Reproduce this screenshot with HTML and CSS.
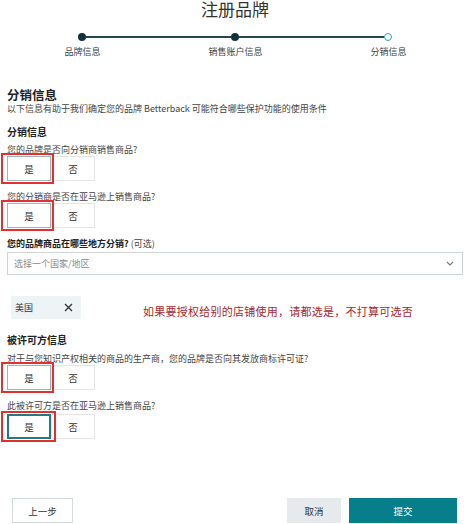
FILE: index.html
```html
<!DOCTYPE html>
<html lang="zh-CN">

<head>
    <meta charset="UTF-8">
    <meta name="viewport" content="width=device-width, initial-scale=1.0">
    <title>注册品牌</title>
    <link rel="stylesheet" href="styles.css">
</head>

<body>
    <div class="page">
        <h1 class="title">注册品牌</h1>

        <div class="steps">
            <div class="track">
                <span class="dot done"></span>
                <span class="bar"></span>
                <span class="dot done"></span>
                <span class="bar"></span>
                <span class="dot current"></span>
            </div>
            <div class="step-labels">
                <span>品牌信息</span>
                <span>销售账户信息</span>
                <span>分销信息</span>
            </div>
        </div>

        <div class="form">
            <h2 class="sec-title">分销信息</h2>
            <p class="desc">以下信息有助于我们确定您的品牌 Betterback 可能符合哪些保护功能的使用条件</p>

            <h3 class="sub-title">分销信息</h3>
            <p class="q q-first">您的品牌是否向分销商销售商品?</p>
            <div class="choice">
                <span class="mark"><button class="opt selected">是</button></span>
                <button class="opt">否</button>
            </div>

            <p class="q">您的分销商是否在亚马逊上销售商品?</p>
            <div class="choice">
                <span class="mark"><button class="opt selected">是</button></span>
                <button class="opt">否</button>
            </div>

            <p class="q"><b>您的品牌商品在哪些地方分销?</b> (可选)</p>
            <div class="select">
                <span class="placeholder">选择一个国家/地区</span>
                <svg class="chevron" width="8" height="5" viewBox="0 0 8 5">
                    <path d="M1 1l3 3 3-3" fill="none" stroke="#777" stroke-width="1.1" />
                </svg>
            </div>

            <div class="chip-row">
                <span class="chip">
                    美国
                    <svg width="9" height="9" viewBox="0 0 9 9">
                        <path d="M1 1l7 7M8 1l-7 7" stroke="#333" stroke-width="1.3" />
                    </svg>
                </span>
                <span class="note">如果要授权给别的店铺使用，请都选是，不打算可选否</span>
            </div>

            <h3 class="sub-title sub-second">被许可方信息</h3>
            <p class="q q-near">对于与您知识产权相关的商品的生产商，您的品牌是否向其发放商标许可证?</p>
            <div class="choice">
                <span class="mark"><button class="opt selected">是</button></span>
                <button class="opt">否</button>
            </div>

            <p class="q">此被许可方是否在亚马逊上销售商品?</p>
            <div class="choice choice-near">
                <span class="mark mark-wide"><button class="opt focused">是</button></span>
                <button class="opt">否</button>
            </div>
        </div>

        <div class="footer">
            <button class="btn btn-back">上一步</button>
            <div class="footer-right">
                <button class="btn btn-cancel">取消</button>
                <button class="btn btn-submit">提交</button>
            </div>
        </div>
    </div>
</body>

</html>
```

FILE: styles.css
```css
* {
    margin: 0;
    padding: 0;
    box-sizing: border-box;
}

body {
    font-family: "Noto Sans CJK SC", "Noto Sans", sans-serif;
    color: #333;
    background: #fff;
}

.page {
    width: 464px;
    height: 524px;
    overflow: hidden;
}

.title {
    font-size: 17px;
    font-weight: 400;
    line-height: 18px;
    height: 18px;
    text-align: center;
    color: #333;
    padding-left: 6px;
}

/* 步骤条 */
.steps {
    margin-top: 15px;
}

.track {
    display: flex;
    align-items: center;
    height: 8px;
    margin: 0 72px 0 78px;
}

.dot {
    width: 8px;
    height: 8px;
    border-radius: 50%;
    flex: none;
}

.dot.done {
    background-color: #12313a;
}

.dot.current {
    border: 1.5px solid #2ba3b3;
    background-color: #fff;
}

.bar {
    flex: 1;
    height: 2px;
    background-color: #244850;
}

.step-labels {
    display: grid;
    grid-template-columns: repeat(3, 153px);
    padding-left: 6px;
    margin-top: 5px;
    font-size: 9px;
    line-height: 12px;
    color: #444;
    text-align: center;
}

/* 表单 */
.form {
    padding: 0 7px;
}

.sec-title {
    margin-top: 29px;
    font-size: 12.5px;
    line-height: 15px;
    font-weight: 700;
    color: #222;
}

.desc {
    margin-top: 1px;
    font-size: 9px;
    line-height: 12px;
    color: #444;
}

.sub-title {
    margin-top: 11px;
    font-size: 10px;
    line-height: 12px;
    font-weight: 700;
    color: #222;
}

.sub-second {
    margin-top: 15px;
}

.q {
    margin-top: 10px;
    font-size: 9px;
    line-height: 12px;
    color: #444;
}

.q b {
    color: #222;
}

.q-first {
    margin-top: 6px;
}

.q-near {
    margin-top: 7px;
}

.choice {
    display: flex;
    height: 25px;
}

.choice-near {
    margin-top: 2px;
}

.opt {
    width: 44px;
    height: 25px;
    border: 1px solid #e3e5e6;
    background-color: #fff;
    font-family: inherit;
    font-size: 9.5px;
    color: #333;
}

.opt.selected {
    border-color: #98b8ba;
}

.opt.focused {
    border: 2px solid #1f7c83;
}

/* 红框标注 */
.mark {
    position: relative;
    display: flex;
    z-index: 1;
}

.mark::after {
    content: "";
    position: absolute;
    top: -3px;
    bottom: -3px;
    left: -6px;
    right: -3px;
    border: 2px solid #e2302f;
    pointer-events: none;
}

.mark-wide::after {
    top: -3px;
    bottom: -3px;
    left: -6px;
    right: -5px;
}

.select {
    margin-top: 2px;
    height: 23px;
    border: 1px solid #cdd3d6;
    display: flex;
    align-items: center;
    justify-content: space-between;
    padding: 0 8px 0 6px;
    width: 456px;
}

.placeholder {
    font-size: 9px;
    color: #8a8a8a;
}

.chip-row {
    margin-top: 21px;
    display: flex;
    align-items: flex-start;
}

.chip {
    display: flex;
    align-items: center;
    justify-content: space-between;
    width: 70px;
    height: 23px;
    margin-left: 4px;
    padding: 0 8px 0 4px;
    background-color: #eef3f6;
    font-size: 9px;
    color: #333;
}

.note {
    margin-left: 62px;
    margin-top: 8px;
    font-size: 11px;
    line-height: 14px;
    letter-spacing: 0.25px;
    color: #a8262b;
}

/* 底部按钮 */
.footer {
    margin-top: 59px;
    display: flex;
    justify-content: space-between;
    padding: 0 7px 0 12px;
}

.footer-right {
    display: flex;
    gap: 8px;
}

.btn {
    height: 25px;
    font-family: inherit;
    font-size: 9.5px;
    border: 1px solid #d5dadc;
    background-color: #fff;
    color: #333;
}

.btn-back {
    width: 61px;
}

.btn-cancel {
    width: 54px;
    border-color: #e6eaec;
    background-color: #e6eaec;
}

.btn-submit {
    width: 108px;
    border-color: #067f8b;
    background-color: #067f8b;
    color: #fff;
}
```
